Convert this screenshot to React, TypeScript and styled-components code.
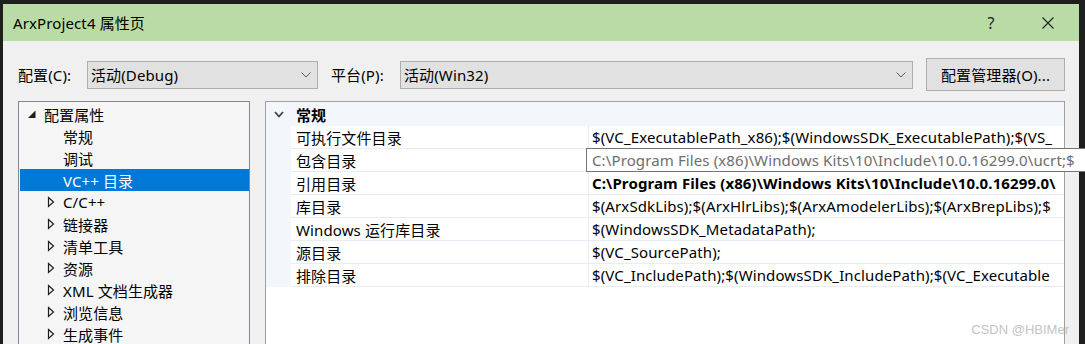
import React from "react";
import styled, { createGlobalStyle } from "styled-components";

const FONT = '"Segoe UI", "Noto Sans", "Noto Sans CJK SC", sans-serif';

const Global = createGlobalStyle`
  html, body { margin: 0; padding: 0; background: #1e1e1e; }
  body { font-family: ${FONT}; font-size: 15px; color: #000; letter-spacing: 0.12px; }
  * { box-sizing: border-box; }
`;

const Screen = styled.div`
  width: 1085px;
  height: 344px;
  overflow: hidden;
  padding: 4px 6px 0 3px;
  background: #1e1e1e;
`;

const Window = styled.div`
  width: 1076px;
  height: 340px;
  background: #f0f0f0;
  display: flex;
  flex-direction: column;
`;

const TitleBar = styled.div`
  height: 37px;
  flex: none;
  background: #b9dba5;
  display: flex;
  align-items: center;
  padding: 0 0 0 10px;
`;

const Title = styled.div`
  flex: 1;
  font-size: 15px;
  color: #000;
`;

const TitleButton = styled.div<{ $w: number }>`
  width: ${(p) => p.$w}px;
  height: 37px;
  display: flex;
  align-items: center;
  justify-content: center;
  font-size: 16px;
  color: #222;
`;

const Body = styled.div`
  flex: 1;
  min-height: 0;
  padding: 17px 14px 0 15px;
  display: flex;
  flex-direction: column;
`;

const ConfigRow = styled.div`
  display: flex;
  align-items: center;
  height: 33px;
`;

const Label = styled.div<{ $w: number; $pl?: number }>`
  width: ${(p) => p.$w}px;
  padding-left: ${(p) => p.$pl ?? 0}px;
  flex: none;
  font-size: 15px;
`;

const Combo = styled.div<{ $w: number }>`
  width: ${(p) => p.$w}px;
  height: 28px;
  flex: none;
  background: #e1e1e1;
  border: 1px solid #adadad;
  display: flex;
  align-items: center;
  padding: 0 0 0 3px;
  font-size: 15px;
`;

const ComboText = styled.span`
  flex: 1;
`;

const ComboArrow = styled.svg`
  width: 10px;
  height: 6px;
  margin-right: 6px;
`;

const Button = styled.div`
  margin-left: auto;
  width: 139px;
  height: 33px;
  background: #e1e1e1;
  border: 1px solid #adadad;
  display: flex;
  align-items: center;
  justify-content: center;
  font-size: 15px;
`;

const Main = styled.div`
  flex: 1;
  min-height: 0;
  margin-top: 10px;
  display: grid;
  grid-template-columns: 232px 800px;
  column-gap: 15px;
`;

const TreePanel = styled.div`
  border: 1px solid #828790;
  border-bottom: none;
  background: #f5f5f5;
  padding: 1px 0 0 1px;
`;

const TreeRow = styled.div<{ $indent: number; $selected?: boolean }>`
  height: 22px;
  width: 229px;
  display: flex;
  align-items: center;
  padding-left: ${(p) => p.$indent}px;
  background: ${(p) => (p.$selected ? "#0078d7" : "transparent")};
  color: ${(p) => (p.$selected ? "#fff" : "#000")};
  font-size: 15px;
  white-space: nowrap;
`;

const Toggle = styled.svg<{ $hidden?: boolean }>`
  width: 8px;
  height: 12px;
  flex: none;
  margin-right: 8px;
  visibility: ${(p) => (p.$hidden ? "hidden" : "visible")};
`;

const GridPanel = styled.div`
  border: 1px solid #a0a0a0;
  border-bottom: none;
  background: #fff;
  display: flex;
  flex-direction: column;
`;

const HeaderRow = styled.div`
  height: 24px;
  background: #f3f6fb;
  display: flex;
  align-items: center;
  font-weight: bold;
  font-size: 15px;
`;

const HeaderText = styled.span`
  padding-left: 5px;
`;

const Gutter = styled.div`
  width: 25px;
  flex: none;
  align-self: stretch;
  background: #f3f6fb;
  display: flex;
  align-items: center;
  justify-content: center;
`;

const Chevron = styled.svg`
  width: 10px;
  height: 7px;
`;

const PropRow = styled.div`
  height: 23px;
  display: flex;
`;

const NameCell = styled.div`
  width: 298px;
  flex: none;
  padding-left: 5px;
  border-right: 1px solid #e8ecf3;
  border-bottom: 1px solid #e8ecf3;
  display: flex;
  align-items: center;
  font-size: 15px;
  white-space: nowrap;
`;

const ValueCell = styled.div<{ $bold?: boolean }>`
  position: relative;
  flex: 1;
  min-width: 0;
  padding-left: 3px;
  border-bottom: 1px solid #e8ecf3;
  display: flex;
  align-items: center;
  font-size: 15px;
  font-weight: ${(p) => (p.$bold ? "bold" : "normal")};
  white-space: nowrap;
`;

const ValueClip = styled.span`
  display: block;
  overflow: hidden;
  width: 100%;
`;

const Tip = styled.div`
  position: absolute;
  left: -3px;
  top: -1px;
  width: 510px;
  height: 24px;
  background: #fff;
  border: 1px solid #767676;
  color: #6d6d6d;
  font-size: 15px;
  font-weight: normal;
  display: flex;
  align-items: center;
  padding-left: 5px;
  white-space: nowrap;
  overflow: hidden;
  z-index: 2;
`;

const Filler = styled.div`
  flex: 1;
  position: relative;
`;

const Watermark = styled.div`
  position: absolute;
  right: -5px;
  top: 35px;
  font-family: "Liberation Sans", Arial, sans-serif;
  font-size: 13px;
  letter-spacing: 0;
  color: #c4c4c4;
`;

const treeItems: { label: string; level: number; toggle?: "open" | "closed"; selected?: boolean }[] = [
  { label: "配置属性", level: 0, toggle: "open" },
  { label: "常规", level: 1 },
  { label: "调试", level: 1 },
  { label: "VC++ 目录", level: 1, selected: true },
  { label: "C/C++", level: 1, toggle: "closed" },
  { label: "链接器", level: 1, toggle: "closed" },
  { label: "清单工具", level: 1, toggle: "closed" },
  { label: "资源", level: 1, toggle: "closed" },
  { label: "XML 文档生成器", level: 1, toggle: "closed" },
  { label: "浏览信息", level: 1, toggle: "closed" },
  { label: "生成事件", level: 1, toggle: "closed" },
];

const props: { name: string; value: string; bold?: boolean; tip?: string }[] = [
  { name: "可执行文件目录", value: "$(VC_ExecutablePath_x86);$(WindowsSDK_ExecutablePath);$(VS_" },
  { name: "包含目录", value: "", tip: "C:\\Program Files (x86)\\Windows Kits\\10\\Include\\10.0.16299.0\\ucrt;$" },
  { name: "引用目录", value: "C:\\Program Files (x86)\\Windows Kits\\10\\Include\\10.0.16299.0\\", bold: true },
  { name: "库目录", value: "$(ArxSdkLibs);$(ArxHlrLibs);$(ArxAmodelerLibs);$(ArxBrepLibs);$" },
  { name: "Windows 运行库目录", value: "$(WindowsSDK_MetadataPath);" },
  { name: "源目录", value: "$(VC_SourcePath);" },
  { name: "排除目录", value: "$(VC_IncludePath);$(WindowsSDK_IncludePath);$(VC_Executable" },
];

const DownArrow = () => (
  <ComboArrow viewBox="0 0 10 6">
    <polyline points="0.5,0.5 5,5 9.5,0.5" fill="none" stroke="#606060" strokeWidth="1" />
  </ComboArrow>
);

export default function App() {
  return (
    <>
      <Global />
      <Screen>
        <Window>
          <TitleBar>
            <Title>ArxProject4 属性页</Title>
            <TitleButton $w={52}>?</TitleButton>
            <TitleButton $w={62}>
              <svg width="12" height="12" viewBox="0 0 12 12">
                <path d="M0.5 0.5 L11.5 11.5 M11.5 0.5 L0.5 11.5" stroke="#222" strokeWidth="1.1" fill="none" />
              </svg>
            </TitleButton>
          </TitleBar>
          <Body>
            <ConfigRow>
              <Label $w={69}>配置(C):</Label>
              <Combo $w={231}>
                <ComboText>活动(Debug)</ComboText>
                <DownArrow />
              </Combo>
              <Label $w={82} $pl={13}>平台(P):</Label>
              <Combo $w={513}>
                <ComboText>活动(Win32)</ComboText>
                <DownArrow />
              </Combo>
              <Button>配置管理器(O)...</Button>
            </ConfigRow>
            <Main>
              <TreePanel>
                {treeItems.map((it) => (
                  <TreeRow key={it.label} $indent={it.level === 0 ? 8 : 27} $selected={it.selected}>
                    {it.toggle === "open" ? (
                      <Toggle viewBox="0 0 8 12">
                        <polygon points="0,10 7.5,10 7.5,2.5" fill="#1e1e1e" />
                      </Toggle>
                    ) : it.toggle === "closed" ? (
                      <Toggle viewBox="0 0 8 12">
                        <polygon points="1.5,1.5 6.5,6 1.5,10.5" fill="none" stroke="#1e1e1e" strokeWidth="1.2" />
                      </Toggle>
                    ) : (
                      <Toggle viewBox="0 0 8 12" $hidden />
                    )}
                    {it.label}
                  </TreeRow>
                ))}
              </TreePanel>
              <GridPanel>
                <HeaderRow>
                  <Gutter>
                    <Chevron viewBox="0 0 10 7">
                      <polyline points="1,1 5,5.5 9,1" fill="none" stroke="#404040" strokeWidth="1.8" />
                    </Chevron>
                  </Gutter>
                  <HeaderText>常规</HeaderText>
                </HeaderRow>
                {props.map((p) => (
                  <PropRow key={p.name}>
                    <Gutter />
                    <NameCell>{p.name}</NameCell>
                    <ValueCell $bold={p.bold}>
                      <ValueClip>{p.value}</ValueClip>
                      {p.tip && <Tip>{p.tip}</Tip>}
                    </ValueCell>
                  </PropRow>
                ))}
                <Filler>
                  <Watermark>CSDN @HBIMer</Watermark>
                </Filler>
              </GridPanel>
            </Main>
          </Body>
        </Window>
      </Screen>
    </>
  );
}
